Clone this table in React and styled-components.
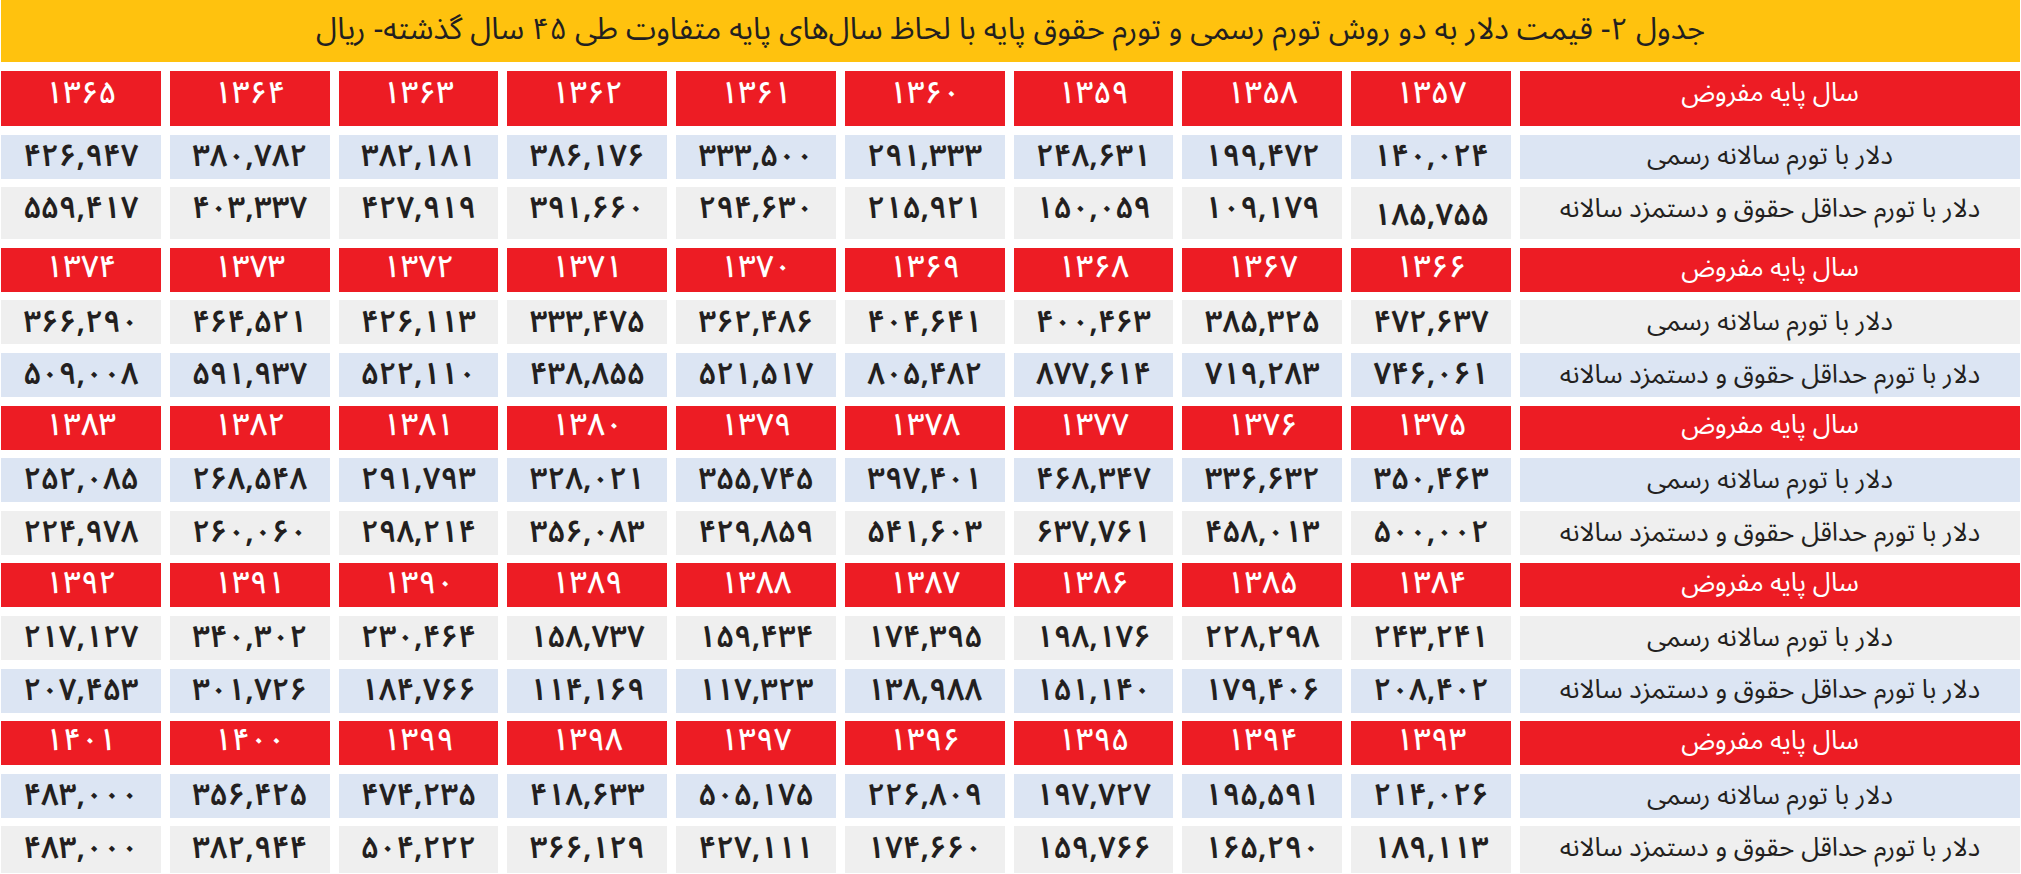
import React from "react";
import styled, { createGlobalStyle } from "styled-components";

const GlobalStyle = createGlobalStyle`
  html, body { margin: 0; padding: 0; background: #ffffff; }
  body { width: 2021px; height: 874px; overflow: hidden; }
  #root { width: 2021px; }
`;

const FONT = `"Noto Sans Arabic", "Vazirmatn", "DejaVu Sans", sans-serif`;

const Page = styled.div`
  width: 2021px;
  height: 874px;
  padding: 0 1px;
  box-sizing: border-box;
  font-family: ${FONT};
  direction: rtl;
  overflow: hidden;
`;

const TitleBar = styled.div`
  height: 62px;
  background: #ffc20e;
  display: flex;
  align-items: center;
  justify-content: center;
  color: #231f20;
  font-size: 30.5px;
  line-height: 1.5;
  padding-bottom: 3px;
  box-sizing: border-box;
`;

const Grid = styled.div`
  margin-top: 9px;
  display: grid;
  grid-template-columns: 500px repeat(9, 1fr);
  grid-template-rows: 55px 44px 52px repeat(11, 44px) 47px;
  column-gap: 9px;
  row-gap: 8.6px;
`;

const tones = {
  red: { bg: "#ed1c24", fg: "#ffffff" },
  blue: { bg: "#dce5f3", fg: "#231f20" },
  gray: { bg: "#efefef", fg: "#231f20" },
};

const Cell = styled.div`
  background: ${(p) => tones[p.$tone].bg};
  color: ${(p) => tones[p.$tone].fg};
  display: flex;
  align-items: center;
  justify-content: center;
  white-space: nowrap;
  box-sizing: border-box;
  line-height: 1.4;
  padding-bottom: ${(p) => p.$pb || 0}px;
  padding-top: ${(p) => p.$pt || 0}px;
`;

const LabelCell = styled(Cell)`
  font-size: 26px;
`;

const NumCell = styled(Cell)`
  font-size: 31px;
  font-weight: ${(p) => (p.$tone === "red" ? 500 : 600)};
  letter-spacing: 3.5px;
  direction: ltr;
`;

const fa = (s) => String(s).replace(/[0-9]/g, (d) => "۰۱۲۳۴۵۶۷۸۹"[d]);

const L1 = "سال پایه مفروض";
const L2 = "دلار با تورم سالانه رسمی";
const L3 = "دلار با تورم حداقل حقوق و دستمزد سالانه";

const groups = [
  {
    start: 1357,
    tones: ["blue", "gray"],
    rows: [
      ["140,024", "199,472", "248,631", "291,333", "333,500", "386,176", "382,181", "380,782", "426,947"],
      ["185,755", "109,179", "150,059", "215,921", "294,630", "391,660", "427,919", "403,337", "559,417"],
    ],
  },
  {
    start: 1366,
    tones: ["gray", "blue"],
    rows: [
      ["472,637", "385,325", "400,463", "404,641", "362,486", "333,475", "426,113", "464,521", "366,290"],
      ["746,061", "719,283", "877,614", "805,482", "521,517", "438,855", "522,110", "591,937", "509,008"],
    ],
  },
  {
    start: 1375,
    tones: ["blue", "gray"],
    rows: [
      ["350,463", "336,632", "468,347", "397,401", "355,745", "328,021", "291,793", "268,548", "252,085"],
      ["500,002", "458,013", "637,761", "541,603", "429,859", "356,083", "298,214", "260,060", "224,978"],
    ],
  },
  {
    start: 1384,
    tones: ["gray", "blue"],
    rows: [
      ["243,241", "228,298", "198,176", "174,395", "159,434", "158,737", "230,464", "340,302", "217,127"],
      ["208,402", "179,406", "151,140", "138,988", "117,323", "114,169", "184,766", "301,726", "207,453"],
    ],
  },
  {
    start: 1393,
    tones: ["blue", "gray"],
    rows: [
      ["214,026", "195,591", "197,727", "226,809", "505,175", "418,633", "474,235", "356,425", "483,000"],
      ["189,113", "165,290", "159,766", "174,660", "427,111", "366,129", "504,222", "382,944", "483,000"],
    ],
  },
];

export default function App() {
  const cells = [];
  groups.forEach((g, gi) => {
    const headPb = gi === 0 ? 10 : 4;
    cells.push(
      <LabelCell key={`h${gi}`} $tone="red" $pb={headPb}>
        {L1}
      </LabelCell>
    );
    for (let i = 0; i < 9; i++) {
      cells.push(
        <NumCell key={`y${gi}-${i}`} $tone="red" $pb={headPb}>
          {fa(g.start + i)}
        </NumCell>
      );
    }
    g.rows.forEach((row, ri) => {
      const tone = g.tones[ri];
      const tall = gi === 0 && ri === 1;
      const last = gi === groups.length - 1 && ri === 1;
      const pb = tall ? 8 : last ? 3 : 0;
      cells.push(
        <LabelCell key={`l${gi}-${ri}`} $tone={tone} $pb={pb}>
          {ri === 0 ? L2 : L3}
        </LabelCell>
      );
      row.forEach((v, ci) => {
        const first = tall && ci === 0;
        cells.push(
          <NumCell
            key={`n${gi}-${ri}-${ci}`}
            $tone={tone}
            $pb={first ? 0 : pb}
            $pt={first ? 6 : 0}
          >
            {fa(v)}
          </NumCell>
        );
      });
    });
  });

  return (
    <>
      <GlobalStyle />
      <Page>
        <TitleBar>
          جدول ۲- قیمت دلار به دو روش تورم رسمی و تورم حقوق پایه با لحاظ سال‌های پایه متفاوت طی ۴۵ سال گذشته- ریال
        </TitleBar>
        <Grid>{cells}</Grid>
      </Page>
    </>
  );
}
